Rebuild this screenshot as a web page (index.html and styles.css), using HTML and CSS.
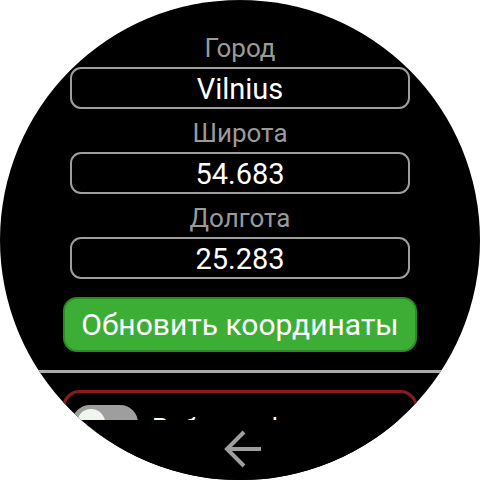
FILE: index.html
```html
<!DOCTYPE html>
<html lang="ru">
<head>
<meta charset="utf-8">
<title>Координаты</title>
<link rel="stylesheet" href="styles.css">
</head>
<body>
<div class="watch">
  <div class="scroll">
    <div class="form">
      <div class="group">
        <div class="label">Город</div>
        <div class="field">Vilnius</div>
      </div>
      <div class="group">
        <div class="label">Широта</div>
        <div class="field">54.683</div>
      </div>
      <div class="group">
        <div class="label">Долгота</div>
        <div class="field">25.283</div>
      </div>
    </div>
    <button class="btn">Обновить координаты</button>
    <div class="divider"></div>
    <div class="card">
      <div class="toggle"><div class="knob"></div></div>
      <div class="card-text">Работа в фоне</div>
    </div>
  </div>
  <div class="bottom-bar">
    <svg class="back" width="48" height="48" viewBox="0 0 48 48">
      <path d="M28 7 L11 24 L28 41 M11 24 H45" fill="none" stroke="#9e9e9e" stroke-width="4"/>
    </svg>
  </div>
</div>
</body>
</html>
```
FILE: styles.css
```css
html, body {
  margin: 0;
  padding: 0;
  background: #fff;
}
.watch {
  width: 480px;
  height: 480px;
  border-radius: 50%;
  background: #000;
  overflow: hidden;
  position: relative;
  font-family: Roboto, "Noto Sans", sans-serif;
}
.scroll {
  display: flex;
  flex-direction: column;
  align-items: center;
  padding-top: 33px;
}
.form {
  display: flex;
  flex-direction: column;
  gap: 9px;
}
.group {
  display: flex;
  flex-direction: column;
  align-items: center;
  gap: 4px;
}
.label {
  font-size: 26px;
  line-height: 30px;
  color: #9a9a9a;
}
.field {
  box-sizing: border-box;
  width: 340px;
  height: 42px;
  border: 2px solid #9e9e9e;
  border-radius: 11px;
  color: #fff;
  font-size: 29px;
  line-height: 36px;
  padding-top: 2px;
  text-align: center;
}
.btn {
  box-sizing: border-box;
  margin-top: 18px;
  width: 354px;
  height: 55px;
  background: #3dae35;
  border: 2px solid #2a8a23;
  border-radius: 14px;
  color: #fff;
  font-family: inherit;
  font-size: 30px;
  padding: 0;
}
.divider {
  align-self: stretch;
  height: 3px;
  background: #aaaaaa;
  margin-top: 18px;
}
.card {
  box-sizing: border-box;
  margin-top: 17px;
  width: 356px;
  border: 3px solid #8c1c1c;
  border-radius: 18px;
  padding: 12px 7px;
  display: flex;
  align-items: flex-start;
  gap: 14px;
}
.toggle {
  width: 66px;
  height: 36px;
  border-radius: 18px;
  background: #9e9e9e;
  display: flex;
  align-items: center;
  padding-left: 5px;
  box-sizing: border-box;
}
.knob {
  width: 28px;
  height: 28px;
  border-radius: 50%;
  background: #eef6ee;
}
.card-text {
  color: #fff;
  font-size: 26px;
  line-height: 30px;
  margin-top: 8px;
}
.bottom-bar {
  position: absolute;
  left: 0;
  right: 0;
  bottom: 0;
  height: 60px;
  background: #000;
  display: flex;
  justify-content: center;
  padding-top: 5px;
  box-sizing: border-box;
}
.back {
  display: block;
}
```
